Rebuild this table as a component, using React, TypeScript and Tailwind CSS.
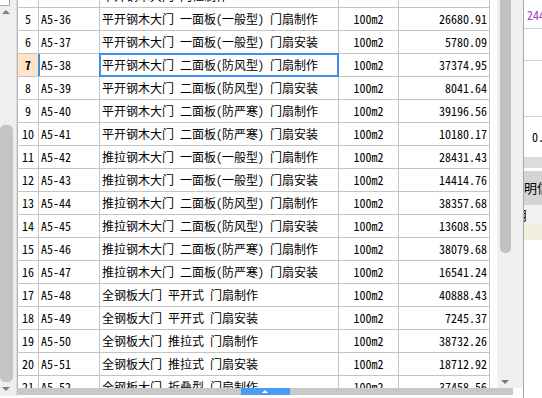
import React from "react";

const rows = [
  { n: "", code: "", name: "平开钢木大门 门框制作", amount: "" },
  { n: "5", code: "A5-36", name: "平开钢木大门 一面板(一般型) 门扇制作", amount: "26680.91" },
  { n: "6", code: "A5-37", name: "平开钢木大门 一面板(一般型) 门扇安装", amount: "5780.09" },
  { n: "7", code: "A5-38", name: "平开钢木大门 二面板(防风型) 门扇制作", amount: "37374.95" },
  { n: "8", code: "A5-39", name: "平开钢木大门 二面板(防风型) 门扇安装", amount: "8041.64" },
  { n: "9", code: "A5-40", name: "平开钢木大门 二面板(防严寒) 门扇制作", amount: "39196.56" },
  { n: "10", code: "A5-41", name: "平开钢木大门 二面板(防严寒) 门扇安装", amount: "10180.17" },
  { n: "11", code: "A5-42", name: "推拉钢木大门 一面板(一般型) 门扇制作", amount: "28431.43" },
  { n: "12", code: "A5-43", name: "推拉钢木大门 一面板(一般型) 门扇安装", amount: "14414.76" },
  { n: "13", code: "A5-44", name: "推拉钢木大门 二面板(防风型) 门扇制作", amount: "38357.68" },
  { n: "14", code: "A5-45", name: "推拉钢木大门 二面板(防风型) 门扇安装", amount: "13608.55" },
  { n: "15", code: "A5-46", name: "推拉钢木大门 二面板(防严寒) 门扇制作", amount: "38079.68" },
  { n: "16", code: "A5-47", name: "推拉钢木大门 二面板(防严寒) 门扇安装", amount: "16541.24" },
  { n: "17", code: "A5-48", name: "全钢板大门 平开式 门扇制作", amount: "40888.43" },
  { n: "18", code: "A5-49", name: "全钢板大门 平开式 门扇安装", amount: "7245.37" },
  { n: "19", code: "A5-50", name: "全钢板大门 推拉式 门扇制作", amount: "38732.26" },
  { n: "20", code: "A5-51", name: "全钢板大门 推拉式 门扇安装", amount: "18712.92" },
  { n: "21", code: "A5-52", name: "全钢板大门 折叠型 门扇制作", amount: "37458.56" },
];

function Row({ r }: { r: (typeof rows)[number] }) {
  const sel = r.n === "7";
  return (
    <div className="flex h-[23px] shrink-0 border-b border-[#c4c4c4]">
      <div
        className={`flex w-[22px] shrink-0 items-center justify-center border-l border-r border-l-[#b4b4b4] ${
          sel ? "bg-[#fde4c6] font-bold border-r-[#3d8fe9]" : "border-r-[#c4c4c4]"
        }`}
      >
        {r.n}
      </div>
      <div
        className={`flex w-[61px] shrink-0 items-center border-r border-[#c4c4c4] pl-[2px] ${
          sel ? "shadow-[inset_1px_0_0_#3d8fe9]" : ""
        }`}
      >
        {r.code}
      </div>
      <div className="relative flex w-[239px] shrink-0 items-center whitespace-nowrap border-r border-[#c4c4c4] pl-[2px]">
        {r.name}
        {sel && <div className="absolute -top-px -bottom-px -left-px -right-px border-2 border-[#3d8fe9]" />}
      </div>
      <div className="flex w-[60px] shrink-0 items-center justify-center border-r border-[#c4c4c4]">
        {r.code ? "100m2" : ""}
      </div>
      <div className="flex w-[91px] shrink-0 items-center justify-end border-r border-[#c4c4c4] pr-[2px]">
        {r.amount}
      </div>
    </div>
  );
}

export default function App() {
  return (
    <div className="flex h-[398px] w-[542px] overflow-hidden bg-white text-[12px] text-black font-['Noto_Sans_Mono_CJK_SC','DejaVu_Sans_Mono','Noto_Sans_CJK_SC',monospace]">
      {/* left scrollbar of the neighbouring pane */}
      <div className="flex h-[396px] w-[17px] shrink-0 flex-col border-r border-[#dcdcdc] bg-[#efefef]">
        <div className="h-[6px] w-[10px] border-b border-r border-[#a8a8a8] bg-white" />
        <div className="mt-[4px] ml-[2px] h-0 w-0 border-x-[4px] border-b-[4px] border-x-transparent border-b-[#7c7c7c]" />
        <div className="mt-[111px] h-[257px] w-[13px] rounded-t-[5px] rounded-b-[5px] bg-[#c4c4c4]" />
        <div className="mt-[5px] ml-[2px] h-0 w-0 border-x-[4px] border-t-[4px] border-x-transparent border-t-[#7c7c7c]" />
      </div>

      {/* grid + scrollbars */}
      <div className="flex w-[506px] shrink-0 flex-col">
        <div className="flex h-[388px]">
          <div className="flex w-[473px] shrink-0 flex-col overflow-hidden">
            <div className="mt-[-15px] flex flex-col">
              {rows.map((r, i) => (
                <Row key={i} r={r} />
              ))}
            </div>
          </div>
          <div className="w-[7px] shrink-0 bg-white" />
          <div className="flex w-[26px] shrink-0 flex-col bg-[#f0f0f0]">
            <div className="ml-[3px] h-[253px] w-[11px] rounded-b-[5px] bg-[#c0c0c0]" />
            <div className="mt-[127px] ml-[4px] h-0 w-0 border-x-[4px] border-t-[4px] border-x-transparent border-t-[#7c7c7c]" />
          </div>
        </div>
        <div className="flex h-[7px] w-[496px] items-stretch justify-center bg-[#c8c8c8]">
          <div className="flex w-[49px] items-center justify-center bg-[#4a9bf2]">
            <div className="h-0 w-0 border-x-[3px] border-b-[3px] border-x-transparent border-b-white" />
          </div>
        </div>
      </div>

      {/* right property pane */}
      <div className="flex min-w-0 flex-1 flex-col overflow-hidden border-l border-[#a8a8a8] text-[12px]">
        <div className="h-[29px] shrink-0 border-b border-[#d4d4d4] pl-[3px] pt-[9px] leading-[12px] text-[#a040c0]">2440</div>
        <div className="h-[32px] shrink-0 border-b border-[#d4d4d4]" />
        <div className="h-[56px] shrink-0 border-b border-[#d4d4d4]" />
        <div className="flex h-[40px] shrink-0 items-center pl-[8px]">0.5</div>
        <div className="h-[11px] shrink-0 bg-[#dcdcdc]" />
        <div className="h-[3px] shrink-0 bg-white" />
        <div className="flex h-[34px] shrink-0 items-center whitespace-nowrap bg-[#d4d4d4] text-[13px] font-['Noto_Sans_CJK_SC',sans-serif]">
          明信息
        </div>
        <div className="flex h-[20px] shrink-0 items-center whitespace-nowrap bg-[#f2f2f2] text-[13px] font-['Noto_Sans_CJK_SC',sans-serif]">
          <span className="ml-[-9px]">月</span>
        </div>
        <div className="h-[15px] shrink-0 bg-[#f1eedd]" />
      </div>
    </div>
  );
}
